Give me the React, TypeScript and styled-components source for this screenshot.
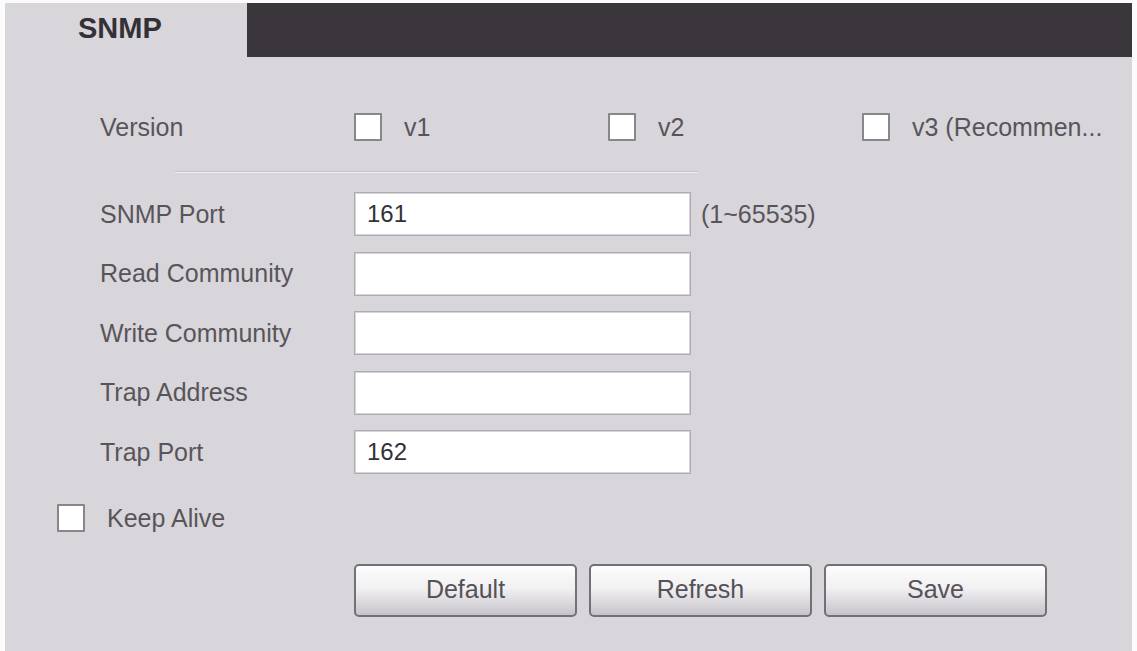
import React from "react";
import styled, { createGlobalStyle } from "styled-components";

const GlobalStyle = createGlobalStyle`
  html, body {
    margin: 0;
    padding: 0;
    background: #fbfbfc;
  }
  body {
    font-family: "Liberation Sans", Arial, sans-serif;
  }
  * { box-sizing: border-box; }
`;

const Page = styled.div`
  width: 1137px;
  height: 651px;
  padding: 3px 5px 0 5px;
  overflow: hidden;
`;

const Panel = styled.div`
  height: 648px;
  background: #d9d6db;
  display: flex;
  flex-direction: column;
`;

const TabBar = styled.div`
  display: flex;
  height: 54px;
`;

const Tab = styled.div`
  width: 242px;
  display: flex;
  align-items: center;
  padding-left: 73px;
  padding-bottom: 4px;
  font-size: 29px;
  font-weight: bold;
  color: #333135;
`;

const TabFill = styled.div`
  flex: 1;
  background: #3b363c;
`;

const Content = styled.div`
  padding: 48px 0 0 52px;
  display: flex;
  flex-direction: column;
`;

const VersionRow = styled.div`
  display: flex;
  align-items: center;
  height: 44px;
  margin-left: 43px;
`;

const Label = styled.div<{ $width?: number }>`
  width: ${(p) => (p.$width ? `${p.$width}px` : "auto")};
  font-size: 25px;
  color: #58555a;
  white-space: nowrap;
`;

const Option = styled.label`
  display: flex;
  align-items: center;
  width: 254px;
`;

const Box = styled.span`
  flex: none;
  width: 28px;
  height: 28px;
  background: #ffffff;
  border: 2px solid #88858b;
  border-radius: 1px;
`;

const OptionText = styled.span`
  margin-left: 22px;
  font-size: 25px;
  color: #58555a;
  white-space: nowrap;
`;

const Separator = styled.div`
  width: 523px;
  margin: 22px 0 19px 118px;
  border-top: 1px solid #c8c5ca;
  border-bottom: 1px solid #f1eff2;
`;

const FieldGrid = styled.div`
  margin-left: 43px;
  display: grid;
  grid-template-columns: 254px 337px auto;
  grid-auto-rows: 44px;
  row-gap: 15.5px;
  align-items: center;
`;

const Input = styled.input`
  width: 337px;
  height: 44px;
  border: 1px solid #aeacb0;
  box-shadow: inset 0 0 0 1px #d6d4d8;
  background: #ffffff;
  padding: 0 12px;
  font-family: "Liberation Sans", Arial, sans-serif;
  font-size: 24px;
  color: #333135;
  outline: none;
`;

const Hint = styled.span`
  margin-left: 10px;
  font-size: 25px;
  color: #58555a;
`;

const KeepAliveRow = styled.label`
  display: flex;
  align-items: center;
  height: 44px;
  margin-top: 22px;
`;

const ButtonRow = styled.div`
  display: flex;
  gap: 12px;
  margin-top: 24px;
  padding-left: 297px;
`;

const Button = styled.button`
  width: 223px;
  height: 53px;
  border: 2px solid #737176;
  border-radius: 5px;
  background: linear-gradient(#fdfdfd 0%, #f1f0f2 45%, #d6d4d9 80%, #c6c4c9 100%);
  font-family: "Liberation Sans", Arial, sans-serif;
  font-size: 25px;
  color: #555258;
  cursor: pointer;
  padding: 0 0 2px 0;
`;

const versions = ["v1", "v2", "v3 (Recommen..."];

const fields: { label: string; value: string; hint?: string }[] = [
  { label: "SNMP Port", value: "161", hint: "(1~65535)" },
  { label: "Read Community", value: "" },
  { label: "Write Community", value: "" },
  { label: "Trap Address", value: "" },
  { label: "Trap Port", value: "162" },
];

export default function App() {
  return (
    <>
      <GlobalStyle />
      <Page>
        <Panel>
          <TabBar>
            <Tab>SNMP</Tab>
            <TabFill />
          </TabBar>
          <Content>
            <VersionRow>
              <Label $width={254}>Version</Label>
              {versions.map((v) => (
                <Option key={v}>
                  <Box />
                  <OptionText>{v}</OptionText>
                </Option>
              ))}
            </VersionRow>
            <Separator />
            <FieldGrid>
              {fields.map((f) => (
                <React.Fragment key={f.label}>
                  <Label>{f.label}</Label>
                  <Input defaultValue={f.value} />
                  {f.hint ? <Hint>{f.hint}</Hint> : <span />}
                </React.Fragment>
              ))}
            </FieldGrid>
            <KeepAliveRow>
              <Box />
              <OptionText>Keep Alive</OptionText>
            </KeepAliveRow>
            <ButtonRow>
              <Button>Default</Button>
              <Button>Refresh</Button>
              <Button>Save</Button>
            </ButtonRow>
          </Content>
        </Panel>
      </Page>
    </>
  );
}
